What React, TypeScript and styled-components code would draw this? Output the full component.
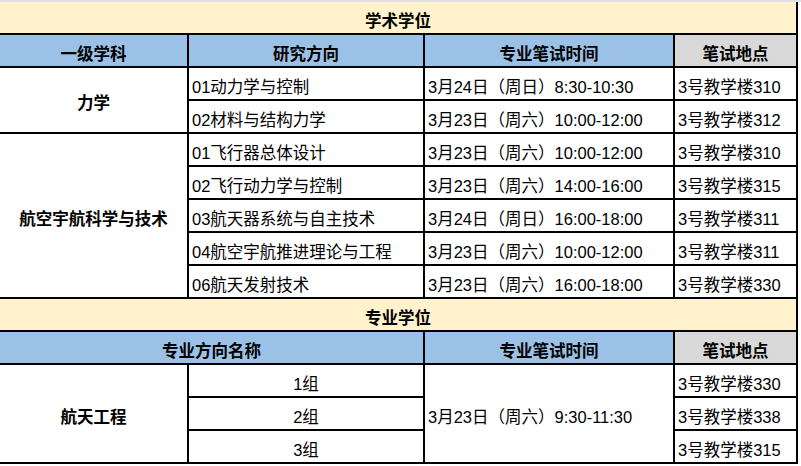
import React from "react";
import styled, { createGlobalStyle } from "styled-components";

const GlobalStyle = createGlobalStyle`
  html, body {
    margin: 0;
    padding: 0;
    background: #ffffff;
  }
  body {
    font-family: "Liberation Sans", "Noto Sans CJK SC", sans-serif;
    font-size: 16.5px;
    color: #000000;
  }
`;

const Sheet = styled.div`
  width: 801px;
  height: 466px;
  overflow: hidden;
  border-top: 2px solid #e1e1e1;
  box-sizing: border-box;
`;

const Grid = styled.div`
  display: grid;
  grid-template-columns: 189px 236px 250px 123px;
  grid-auto-rows: 33px;
  width: 798px;
`;

type Tone = "title" | "head" | "place" | "plain";

const tones: Record<Tone, string> = {
  title: "#fff2cc",
  head: "#9bc2e6",
  place: "#d9d9d9",
  plain: "#ffffff",
};

const Cell = styled.div<{
  $tone?: Tone;
  $bold?: boolean;
  $left?: boolean;
  $cols?: number;
  $rows?: number;
}>`
  box-sizing: border-box;
  display: flex;
  align-items: center;
  justify-content: ${(p) => (p.$left ? "flex-start" : "center")};
  padding: 4px 0 0 ${(p) => (p.$left ? "3px" : "0")};
  background: ${(p) => tones[p.$tone || "plain"]};
  font-weight: ${(p) => (p.$bold ? 700 : 400)};
  border-right: 2px solid #000;
  border-bottom: 2px solid #000;
  white-space: nowrap;
  grid-column: ${(p) => (p.$cols ? `span ${p.$cols}` : "auto")};
  grid-row: ${(p) => (p.$rows ? `span ${p.$rows}` : "auto")};
`;

const Title = styled(Cell).attrs({ $tone: "title" as Tone, $bold: true, $cols: 4 })``;

interface Row {
  name: string;
  time: string;
  place: string;
}

const academic: { subject: string; rows: Row[] }[] = [
  {
    subject: "力学",
    rows: [
      { name: "01动力学与控制", time: "3月24日（周日）8:30-10:30", place: "3号教学楼310" },
      { name: "02材料与结构力学", time: "3月23日（周六）10:00-12:00", place: "3号教学楼312" },
    ],
  },
  {
    subject: "航空宇航科学与技术",
    rows: [
      { name: "01飞行器总体设计", time: "3月23日（周六）10:00-12:00", place: "3号教学楼310" },
      { name: "02飞行动力学与控制", time: "3月23日（周六）14:00-16:00", place: "3号教学楼315" },
      { name: "03航天器系统与自主技术", time: "3月24日（周日）16:00-18:00", place: "3号教学楼311" },
      { name: "04航空宇航推进理论与工程", time: "3月23日（周六）10:00-12:00", place: "3号教学楼311" },
      { name: "06航天发射技术", time: "3月23日（周六）16:00-18:00", place: "3号教学楼330" },
    ],
  },
];

const groups = [
  { name: "1组", place: "3号教学楼330" },
  { name: "2组", place: "3号教学楼338" },
  { name: "3组", place: "3号教学楼315" },
];

const App: React.FC = () => {
  return (
    <Sheet>
      <GlobalStyle />
      <Grid>
        <Title>学术学位</Title>
        <Cell $tone="head" $bold>一级学科</Cell>
        <Cell $tone="head" $bold>研究方向</Cell>
        <Cell $tone="head" $bold>专业笔试时间</Cell>
        <Cell $tone="place" $bold>笔试地点</Cell>
        {academic.map((group) =>
          group.rows.map((row, i) => (
            <React.Fragment key={row.name}>
              {i === 0 && (
                <Cell $bold $rows={group.rows.length}>
                  {group.subject}
                </Cell>
              )}
              <Cell $left>{row.name}</Cell>
              <Cell $left>{row.time}</Cell>
              <Cell $left>{row.place}</Cell>
            </React.Fragment>
          ))
        )}

        <Title>专业学位</Title>
        <Cell $tone="head" $bold $cols={2}>专业方向名称</Cell>
        <Cell $tone="head" $bold>专业笔试时间</Cell>
        <Cell $tone="place" $bold>笔试地点</Cell>
        {groups.map((g, i) => (
          <React.Fragment key={g.name}>
            {i === 0 && (
              <Cell $bold $rows={groups.length}>
                航天工程
              </Cell>
            )}
            <Cell>{g.name}</Cell>
            {i === 0 && (
              <Cell $left $rows={groups.length}>
                3月23日（周六）9:30-11:30
              </Cell>
            )}
            <Cell $left>{g.place}</Cell>
          </React.Fragment>
        ))}
      </Grid>
    </Sheet>
  );
};

export default App;
